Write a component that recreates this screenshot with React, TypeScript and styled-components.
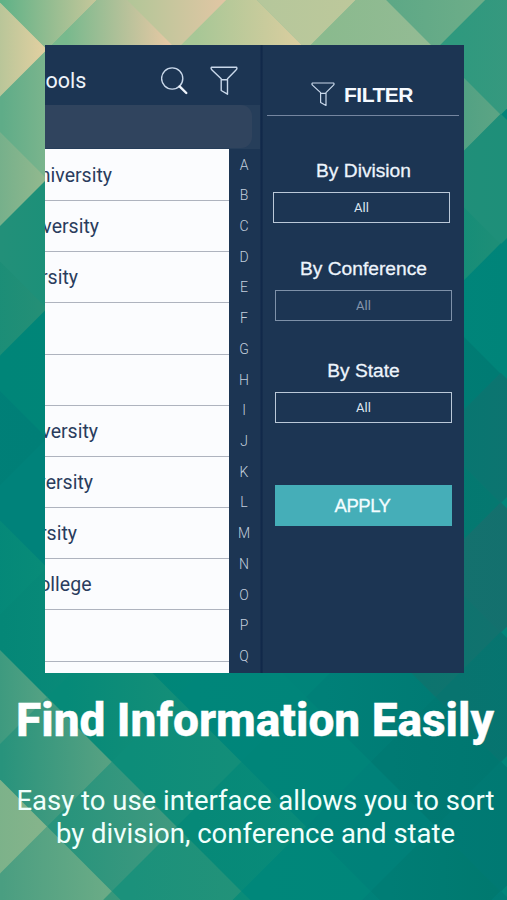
import React from 'react';
import styled, { createGlobalStyle } from 'styled-components';

const GlobalStyle = createGlobalStyle`
  * { box-sizing: border-box; }
  html, body { margin: 0; padding: 0; }
  body { background: #00857a; overflow: hidden; }
`;

const Page = styled.main`
  position: relative;
  width: 507px;
  height: 900px;
  overflow: hidden;
  padding-top: 45px;
  font-family: Roboto, 'Liberation Sans', sans-serif;
  color: #fff;
`;

const Backdrop = styled.svg`
  position: absolute;
  inset: 0;
  width: 507px;
  height: 900px;
`;

const Device = styled.section`
  position: relative;
  display: flex;
  width: 419px;
  height: 627.5px;
  margin-left: 45px;
  overflow: hidden;
  background: #1c3553;
`;

const Schools = styled.div`
  display: flex;
  flex-direction: column;
  width: 215px;
  flex: none;
`;

const TopBar = styled.header`
  display: flex;
  align-items: flex-start;
  height: 60px;
  padding-top: 20px;
  flex: none;
`;

const Title = styled.div`
  width: 115.5px;
  padding-left: 0.5px;
  font-size: 21.5px;
  line-height: 31px;
  color: #eef3fa;
`;

const SearchIcon = styled.svg`
  width: 28px;
  height: 30px;
  flex: none;
`;

const FilterIcon = styled.svg<{ $width: number; $height: number }>`
  width: ${(p) => p.$width}px;
  height: ${(p) => p.$height}px;
  flex: none;
  fill: none;
  stroke: #c9d8ea;
`;

const TopFilter = styled.div`
  margin-left: 21px;
  padding-top: 1px;
`;

const SearchBar = styled.div`
  height: 44px;
  flex: none;
  background: #263e5a;
`;

const SearchField = styled.div`
  width: 207px;
  height: 43px;
  background: #30445e;
  border-radius: 0 11px 11px 0;
`;

const ListArea = styled.div`
  display: flex;
  flex: 1;
  min-height: 0;
`;

const List = styled.div`
  width: 184px;
  height: 524px;
  padding-top: 0.8px;
  overflow: hidden;
  background: #fbfcfe;
`;

const Row = styled.div<{ $end: number }>`
  display: flex;
  justify-content: flex-end;
  width: 184px;
  height: 51.2px;
  padding-right: ${(p) => 184 - p.$end}px;
  border-bottom: 1px solid #aeb3be;
  font-size: 19.5px;
  line-height: 51px;
  white-space: nowrap;
  color: #2a3c5d;
`;

const LetterIndex = styled.div`
  display: flex;
  flex-direction: column;
  align-items: center;
  width: 30px;
  padding-top: 0.5px;
  font-size: 14px;
  font-weight: 300;
  color: #c3cfdd;
`;

const Letter = styled.span`
  height: 30.72px;
  flex: none;
  line-height: 31px;
`;

const Divider = styled.div`
  width: 3px;
  flex: none;
  background: linear-gradient(90deg, #1a3150, #11294a 50%, #182f4e);
`;

const FilterPanel = styled.aside`
  display: flex;
  flex-direction: column;
  width: 201px;
  flex: none;
  padding-left: 4px;
  font-family: 'Liberation Sans', Arial, sans-serif;
`;

const FilterHeader = styled.div`
  display: flex;
  width: 192px;
  height: 71px;
  padding: 37px 0 0 44px;
  border-bottom: 1.5px solid #7586a0;
`;

const FilterTitle = styled.h2`
  margin: 0 0 0 9px;
  font-size: 21px;
  line-height: 25px;
  letter-spacing: -0.5px;
  color: #f6faff;
`;

const Group = styled.div<{ $gap: number; $shift?: number }>`
  display: flex;
  flex-direction: column;
  align-items: center;
  width: 177px;
  margin: ${(p) => p.$gap}px 0 0 ${(p) => 8 - (p.$shift ?? 0)}px;
`;

const GroupLabel = styled.label<{ $shift?: number }>`
  height: 26px;
  margin-left: ${(p) => (p.$shift ?? 0) * 2}px;
  font-size: 19.2px;
  line-height: 26px;
  color: #edf4fc;
  -webkit-text-stroke: 0.3px #edf4fc;
  white-space: nowrap;
`;

const Choice = styled.button<{ $dim?: boolean }>`
  width: 177px;
  height: 31px;
  margin: 8px 0 0;
  padding: 0;
  border: 1.5px solid ${(p) => (p.$dim ? '#7e91a9' : '#bac8d8')};
  background: transparent;
  color: ${(p) => (p.$dim ? '#8496ad' : '#dce6f1')};
  font: 13px/27px Roboto, sans-serif;
`;

const Apply = styled.button`
  width: 177px;
  height: 41px;
  margin: 62px 0 0 8px;
  padding: 0 2px 0 0;
  border: 0;
  background: #45aeb8;
  color: #f3fdff;
  font: 18.5px/41px 'Liberation Sans', Arial, sans-serif;
  letter-spacing: -0.5px;
  -webkit-text-stroke: 0.3px #f3fdff;
`;

const Caption = styled.footer`
  position: relative;
  text-align: center;
  white-space: nowrap;
`;

const Headline = styled.h1`
  margin: 19px 0 0 3px;
  font-size: 46px;
  font-weight: 800;
  line-height: 56px;
  -webkit-text-stroke: 0.4px #fff;
`;

const Description = styled.p`
  margin: 36.5px 0 0 4px;
  font-size: 27.5px;
  line-height: 33px;
  color: #f0fffc;
`;

type Tile = [column: number, row: number, left: string, right: string];

const tiles: Tile[] = [
  [-2, -2, '#8abb8f', '#8abb8f'],
  [-2, 0, '#7fb78e', '#dfcfa0'],
  [-2, 2, '#4fa486', '#90b88e'],
  [-2, 4, '#108c78', '#248f76'],
  [-2, 6, '#008078', '#007f77'],
  [-2, 8, '#008579', '#088b78'],
  [-2, 10, '#1f9079', '#52a183'],
  [-2, 12, '#70af88', '#85b48b'],
  [-2, 14, '#6dab85', '#6dab85'],
  [-1, -1, '#60b287', '#d0c99c'],
  [-1, 1, '#5fac88', '#a0c093'],
  [-1, 3, '#229079', '#159078'],
  [-1, 5, '#008578', '#008678'],
  [-1, 7, '#00827a', '#00827a'],
  [-1, 9, '#058777', '#0b8c79'],
  [-1, 11, '#28937c', '#56a182'],
  [-1, 13, '#4a9e81', '#6aab86'],
  [0, 0, '#78b98d', '#e7c8a4'],
  [0, 10, '#068a78', '#138e78'],
  [0, 12, '#28947c', '#40997f'],
  [0, 14, '#339779', '#40997e'],
  [1, -1, '#b3c698', '#e6c6a5'],
  [1, 9, '#008678', '#00877a'],
  [1, 11, '#0d8d79', '#138e79'],
  [1, 13, '#1b917b', '#229279'],
  [2, 0, '#a7c796', '#dacd9f'],
  [2, 10, '#00867a', '#00857a'],
  [2, 12, '#068978', '#098b79'],
  [2, 14, '#078b78', '#0f8d78'],
  [3, -1, '#b5c79b', '#bec89b'],
  [3, 9, '#00847a', '#008479'],
  [3, 11, '#008579', '#008479'],
  [3, 13, '#00877a', '#00867a'],
  [4, 0, '#8aba8e', '#94bb94'],
  [4, 10, '#008078', '#007b74'],
  [4, 12, '#008279', '#008079'],
  [4, 14, '#008279', '#008078'],
  [5, -1, '#5da886', '#70ae89'],
  [5, 1, '#3e9c82', '#5ba484'],
  [5, 3, '#078c79', '#1d8e77'],
  [5, 5, '#007e75', '#007b73'],
  [5, 7, '#007a71', '#057870'],
  [5, 9, '#0a756e', '#11726e'],
  [5, 11, '#007a73', '#007770'],
  [5, 13, '#007d75', '#00796f'],
  [6, -2, '#3a9b81', '#3a9b81'],
  [6, 0, '#2f997e', '#3c987f'],
  [6, 2, '#208f79', '#1c8f79'],
  [6, 4, '#00857a', '#008378'],
  [6, 6, '#087670', '#107370'],
  [6, 8, '#14716e', '#136f6d'],
  [6, 10, '#08746f', '#057570'],
  [6, 12, '#007a74', '#007870'],
  [6, 14, '#007e77', '#007b73'],
];

const HALF = 64.75;

function DiamondPattern() {
  return (
    <Backdrop viewBox="0 0 507 900" aria-hidden="true">
      <defs>
        {tiles.map(([c, r, left, right]) => (
          <linearGradient key={`${c},${r}`} id={`tile${c + 2}-${r + 2}`}>
            <stop offset="0.15" stopColor={left} />
            <stop offset="0.95" stopColor={right} />
          </linearGradient>
        ))}
      </defs>
      <rect width="507" height="900" fill="#008579" />
      {tiles.map(([c, r]) => {
        const x = 112.25 + HALF * c;
        const y = 49.5 + HALF * r;
        const h = HALF + 0.4;
        return (
          <path
            key={`${c},${r}`}
            d={`M${x - h} ${y}L${x} ${y - h}L${x + h} ${y}L${x} ${y + h}Z`}
            fill={`url(#tile${c + 2}-${r + 2})`}
          />
        );
      })}
    </Backdrop>
  );
}

function Funnel({ width, height }: { width: number; height: number }) {
  return (
    <FilterIcon $width={width} $height={height} viewBox="0 0 28 30" preserveAspectRatio="none">
      <path
        d="M1.5 1.2H26.5Q27.5 2.8 26 4L17.5 12.8V28.2L11.2 24.5V12.8L2 4Q.5 2.6 1.5 1.2ZM11.2 13.7H17.5"
        strokeWidth="1.4"
        strokeLinejoin="round"
      />
    </FilterIcon>
  );
}

const rows = [
  { name: 'niversity', end: 67 },
  { name: 'versity', end: 54 },
  { name: 'rsity', end: 33 },
  { name: '', end: 0 },
  { name: '', end: 0 },
  { name: 'versity', end: 53 },
  { name: 'versity', end: 48 },
  { name: 'rsity', end: 32 },
  { name: 'ollege', end: 46.5 },
  { name: '', end: 0 },
  { name: '', end: 0 },
];

export default function App() {
  return (
    <>
      <GlobalStyle />
      <Page>
        <DiamondPattern />
        <Device>
          <Schools>
            <TopBar>
              <Title>ools</Title>
              <SearchIcon viewBox="0 0 28 30" fill="none" strokeLinecap="round">
                <circle cx="11.2" cy="13.5" r="10.6" stroke="#c9d8ea" strokeWidth="1.4" />
                <path d="M18.6 21.4L25.3 28" stroke="#eef4fb" strokeWidth="2.4" />
              </SearchIcon>
              <TopFilter>
                <Funnel width={28} height={30} />
              </TopFilter>
            </TopBar>
            <SearchBar>
              <SearchField />
            </SearchBar>
            <ListArea>
              <List>
                {rows.map((row, i) => (
                  <Row key={i} $end={row.end}>{row.name}</Row>
                ))}
              </List>
              <LetterIndex>
                {'ABCDEFGHIJKLMNOPQ'.split('').map((l) => (
                  <Letter key={l}>{l}</Letter>
                ))}
              </LetterIndex>
            </ListArea>
          </Schools>
          <Divider />
          <FilterPanel>
            <FilterHeader>
              <Funnel width={24} height={25} />
              <FilterTitle>FILTER</FilterTitle>
            </FilterHeader>
            <Group $gap={42} $shift={2}>
              <GroupLabel $shift={2}>By Division</GroupLabel>
              <Choice>All</Choice>
            </Group>
            <Group $gap={33}>
              <GroupLabel>By Conference</GroupLabel>
              <Choice $dim>All</Choice>
            </Group>
            <Group $gap={37}>
              <GroupLabel>By State</GroupLabel>
              <Choice>All</Choice>
            </Group>
            <Apply>APPLY</Apply>
          </FilterPanel>
        </Device>
        <Caption>
          <Headline>Find Information Easily</Headline>
          <Description>
            Easy to use interface allows you to sort
            <br />
            by division, conference and state
          </Description>
        </Caption>
      </Page>
    </>
  );
}
